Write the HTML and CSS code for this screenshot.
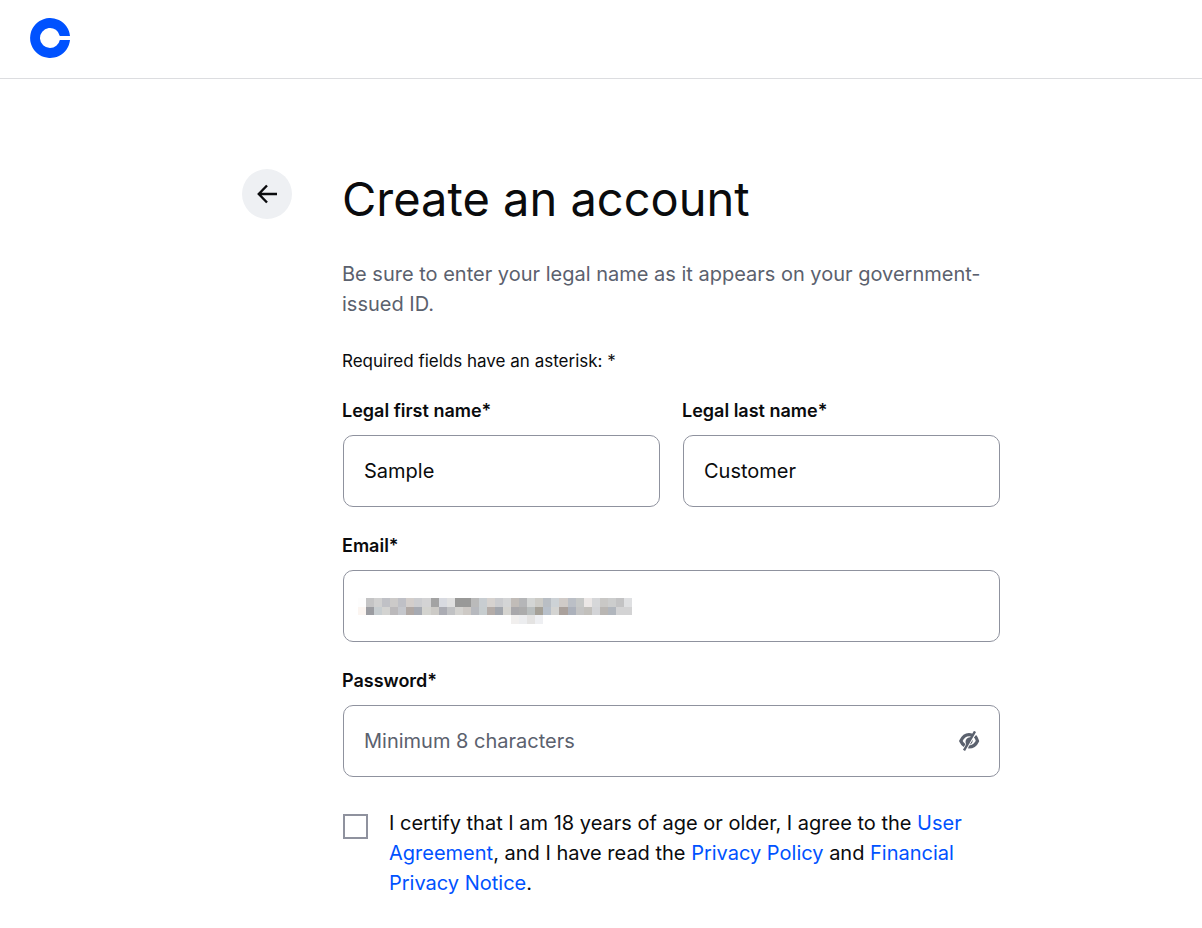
FILE: index.html
```html
<!DOCTYPE html>
<html lang="en">
<head>
    <meta charset="utf-8">
    <meta name="viewport" content="width=device-width, initial-scale=1">
    <title>Create an account</title>
    <link rel="stylesheet" href="styles.css">
</head>
<body>
    <header class="header">
        <a href="#" class="logo" aria-label="Home">
            <svg width="40" height="40" viewBox="0 0 40 40">
                <path fill="#0052ff" d="M20 30a10 10 0 1 1 9.8-12H40A20 20 0 1 0 40 22H29.8A10 10 0 0 1 20 30z"/>
            </svg>
        </a>
    </header>

    <main class="signup">
        <button type="button" class="back" aria-label="Back">
            <svg width="20" height="20" viewBox="0 0 20 20" fill="none" stroke="#0a0b0d" stroke-width="2.4">
                <path d="M20 10H2M10 1.5L1.8 10l8.2 8.5"/>
            </svg>
        </button>

        <form class="form">
            <h1>Create an account</h1>
            <p class="intro">Be sure to enter your legal name as it appears on your government-issued ID.</p>
            <p class="required">Required fields have an asterisk: *</p>

            <div class="row">
                <div class="field">
                    <label for="first-name">Legal first name*</label>
                    <div class="input-wrap">
                        <input type="text" id="first-name" value="Sample">
                    </div>
                </div>
                <div class="field">
                    <label for="last-name">Legal last name*</label>
                    <div class="input-wrap">
                        <input type="text" id="last-name" value="Customer">
                    </div>
                </div>
            </div>

            <div class="field">
                <label for="email">Email*</label>
                <div class="input-wrap">
                    <input type="email" id="email">
                    <svg class="mask" id="email-mask" viewBox="0 0 34 3" preserveAspectRatio="none" shape-rendering="crispEdges"></svg>
                </div>
            </div>

            <div class="field">
                <label for="password">Password*</label>
                <div class="input-wrap">
                    <input type="password" id="password" placeholder="Minimum 8 characters">
                    <button type="button" class="toggle" aria-label="Show password">
                        <svg width="22" height="20" viewBox="0 0 22 20" fill="none" stroke="#5b616e">
                            <path stroke-width="3.2" d="M14.4 4.2C8.6 2.4 5 5.4 2.8 10c.9 2 2 3.4 3.8 4.6M17 5.2c1.2 1.2 2 2.8 2.5 4.8-1.8 4-4.4 6.2-9.2 6"/>
                            <path fill="#5b616e" stroke="none" d="M13 6.4L8.4 14C6.2 10 8.6 5.8 13 6.4z"/>
                            <path fill="#5b616e" stroke="none" d="M14.4 8.6c.8 2.6-.4 4.4-3.1 5.2z"/>
                            <path stroke="#fff" stroke-width="1" d="M18.4 1.4L7.6 19.8"/>
                            <path stroke-width="2.4" d="M17 .4L6 19.4"/>
                        </svg>
                    </button>
                </div>
            </div>

            <div class="certify">
                <input type="checkbox" id="certify">
                <label for="certify">I certify that I am 18 years of age or older, I agree to the <a href="#">User Agreement</a>, and I have read the <a href="#">Privacy Policy</a> and <a href="#">Financial Privacy Notice</a>.</label>
            </div>
        </form>
    </main>

    <script>
        // pixelated email, one colour per cell
        const rows = [
            'fdfdfd c4c4c5 d0d0d0 c0c1c6 cccac9 bfc0c6 d3cecb cccdd0 d3d3d4 a3a3a3 d8dae0 e0e0e0 999998 999998 bababa c8cdd1 d6d2cf cbcccf d4d5d6 c1bcb8 b5b6b8 d3d5d4 cccbc6 b9bec4 cdd2d6 d0cbc8 bbbfc6 c6c8c7 ebe7e6 d6d7d9 c9c8c6 cccdcd c3c3c4 dfe0e2',
            'fbf5f1 9b9ca1 c7cdd0 d3d3d1 bbb9bb c5c7cc b0a8a4 a6aab2 d3d3cf cccac6 abacb3 c1c2c4 d4d3d0 cdc9c5 b7b9be c7cdcf b4aca8 a2a6ad d5d4d0 a9a8ab acacac b9bebe a5a198 b8c0ca d4d4d2 aaa19c acb1bb c4c4c4 c2c0bc d3d4d7 b9b6b3 b1b6bd d3d3d4 d3d3d4',
            'f1efee ecedef e4e3e2 eeeff2'
        ];
        const offsets = [0, 0, 19];
        const mask = document.getElementById('email-mask');

        rows.forEach((row, y) => {
            row.split(' ').forEach((color, i) => {
                const rect = document.createElementNS('http://www.w3.org/2000/svg', 'rect');
                rect.setAttribute('x', i + offsets[y]);
                rect.setAttribute('y', y);
                rect.setAttribute('width', 1);
                rect.setAttribute('height', 1);
                rect.setAttribute('fill', '#' + color);
                mask.appendChild(rect);
            });
        });
    </script>
</body>
</html>
```
FILE: styles.css
```css
* {
    box-sizing: border-box;
}
body {
    margin: 0;
    font-family: Inter, "Liberation Sans", sans-serif;
    font-size: 20px;
    line-height: 30px;
    color: #0a0b0d;
    background-color: #fff;
}
.header {
    display: flex;
    align-items: center;
    padding: 18px 30px 20px;
    border-bottom: 1px solid #dcdde0;
}
.logo {
    display: flex;
}
.signup {
    display: flex;
    align-items: flex-start;
    gap: 50px;
    max-width: 798px;
    margin: 0 auto;
    padding: 90px 0 30px 40px;
}
.back {
    display: flex;
    flex-shrink: 0;
    align-items: center;
    justify-content: center;
    width: 50px;
    height: 50px;
    padding: 0;
    border: none;
    border-radius: 50%;
    background-color: #eef0f3;
    cursor: pointer;
}
.form {
    flex: 1;
    min-width: 0;
}
h1 {
    margin: 0 0 30px;
    font-size: 47px;
    line-height: 60px;
    font-weight: 400;
}
p {
    margin: 0;
}
.intro {
    color: #5b616e;
}
.required {
    margin: 30px 0 26px;
    font-size: 17px;
    line-height: 24px;
}
.row {
    display: grid;
    grid-template-columns: 1fr 1fr;
    gap: 22px;
}
.field {
    display: flex;
    flex-direction: column;
    gap: 12px;
    min-width: 0;
    margin-bottom: 27px;
}
.field label {
    font-size: 18px;
    line-height: 24px;
    font-weight: 600;
}
.input-wrap {
    display: flex;
    position: relative;
    padding-left: 1px;
}
.input-wrap input {
    width: 100%;
    height: 72px;
    padding: 0 20px;
    border: 1px solid #8f929e;
    border-radius: 10px;
    background-color: #fff;
    font: inherit;
    color: #0a0b0d;
}
.input-wrap input::placeholder {
    color: #5b616e;
    opacity: 1;
}
.mask {
    position: absolute;
    left: 16px;
    top: 28px;
    width: 274px;
    height: 26px;
    pointer-events: none;
}
.toggle {
    display: flex;
    position: absolute;
    right: 20px;
    top: 26px;
    padding: 0;
    border: none;
    background: none;
    cursor: pointer;
}
.certify {
    display: flex;
    align-items: flex-start;
    gap: 21px;
    padding-top: 4px;
}
.certify input {
    appearance: none;
    flex-shrink: 0;
    width: 25px;
    height: 25px;
    margin: 6px 0 0 1px;
    border: 2px solid #8f929e;
    background-color: #fff;
}
.certify input:checked {
    background-color: #0052ff;
}
a {
    color: #0052ff;
    text-decoration: none;
}
```
